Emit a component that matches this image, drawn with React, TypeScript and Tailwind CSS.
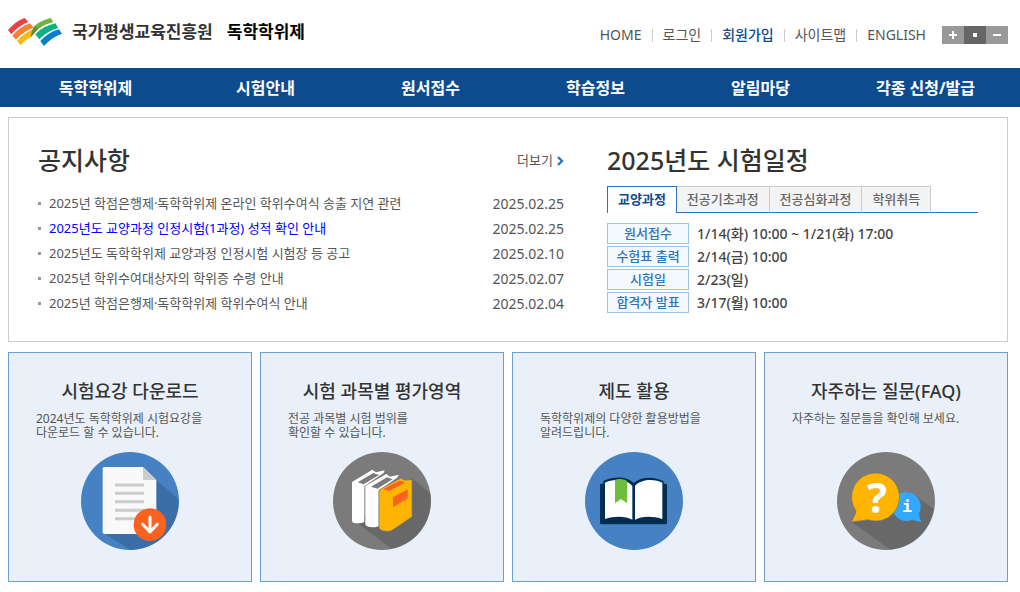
import { ReactNode, useState } from "react";
import clsx from "clsx";

const topLinks = ["HOME", "로그인", "회원가입", "사이트맵", "ENGLISH"];

const menus = [
  "독학학위제",
  "시험안내",
  "원서접수",
  "학습정보",
  "알림마당",
  "각종 신청/발급",
];

const notices = [
  {
    title: "2025년 학점은행제·독학학위제 온라인 학위수여식 송출 지연 관련",
    date: "2025.02.25",
  },
  {
    title: "2025년도 교양과정 인정시험(1과정) 성적 확인 안내",
    date: "2025.02.25",
    highlight: true,
  },
  {
    title: "2025년도 독학학위제 교양과정 인정시험 시험장 등 공고",
    date: "2025.02.10",
  },
  { title: "2025년 학위수여대상자의 학위증 수령 안내", date: "2025.02.07" },
  { title: "2025년 학점은행제·독학학위제 학위수여식 안내", date: "2025.02.04" },
];

const tabs = ["교양과정", "전공기초과정", "전공심화과정", "학위취득"];

const schedule = [
  { label: "원서접수", value: "1/14(화) 10:00 ~ 1/21(화) 17:00" },
  { label: "수험표 출력", value: "2/14(금) 10:00" },
  { label: "시험일", value: "2/23(일)" },
  { label: "합격자 발표", value: "3/17(월) 10:00" },
];

function Logo() {
  return (
    <svg viewBox="24 57 162 84" className="h-7 w-[54px]" aria-hidden="true">
      <path d="M24 93C38 77 54 64 74 57l11 12c-20 7-37 20-51 37z" fill="#ef3e42" />
      <path d="M37 110c14-17 32-30 53-37l11 13c-21 7-38 19-53 36z" fill="#f58232" />
      <path d="M51 126c14-16 30-28 48-35l-6 24c-13 5-22 13-31 24z" fill="#fdb913" />
      <path d="M92 115c2-18 6-30 16-38 12-9 27-16 44-20l8 12c-20 5-36 13-48 24z" fill="#6cb33f" />
      <path d="M92 115c2-14 6-25 13-34l9 10c-7 6-13 14-22 24z" fill="#6b8a2c" />
      <path d="M106 106c16-17 36-28 60-33l9 14c-22 5-41 17-57 34z" fill="#0bb184" />
      <path d="M121 126c15-17 34-29 56-35l9 13c-22 8-40 20-54 37z" fill="#0a7fc9" />
    </svg>
  );
}

function IconCircle({
  color,
  shadow,
  children,
}: {
  color: string;
  shadow?: string;
  children: ReactNode;
}) {
  return (
    <svg viewBox="0 0 294 294" className="size-[98px]" aria-hidden="true">
      <circle cx="147" cy="147" r="147" fill={color} />
      {shadow && <path d={shadow} fill="#000" fillOpacity="0.15" />}
      {children}
    </svg>
  );
}

function DownloadIcon() {
  return (
    <IconCircle
      color="#4682c3"
      shadow="M226 84L293 140A147 147 0 0 1 150 294L72 246z"
    >
      <path
        d="M70 45H186L226 84V241a5 5 0 0 1-5 5H70a5 5 0 0 1-5-5V50a5 5 0 0 1 5-5z"
        fill="#f9f9f9"
      />
      <path d="M186 45L226 84H190a4 4 0 0 1-4-4z" fill="#ccc" />
      <path
        d="M102 99h87M102 124h87M102 149h87M102 175h87M102 200h87"
        stroke="#ccc"
        strokeWidth="9"
      />
      <circle cx="207" cy="218" r="49" fill="#fb611f" />
      <path
        d="M207 195v44M185 217l22 23 22-23"
        fill="none"
        stroke="#fff"
        strokeWidth="9"
        strokeLinecap="round"
        strokeLinejoin="round"
      />
    </IconCircle>
  );
}

function BooksIcon() {
  return (
    <IconCircle
      color="#7b7b7b"
      shadow="M237 78L293 126A147 147 0 0 1 175 290L72 212z"
    >
      <path
        d="M57 90L118 53l11 8 26-6-3 8-8 5-50 35v106c-8 6-37 8-37-2z"
        fill="#fff"
      />
      <path d="M74 91L121 63l17 6-46 28z" fill="#7b7b7b" />
      <path
        d="M97 102L160 66l11 8 26-6-3 8-57 40v106c-8 6-40 5-40-6z"
        fill="#fff"
      />
      <path d="M114 104L162 76l17 6-46 28z" fill="#7b7b7b" />
      <path
        d="M138 114L204 78l10 7 23-2v111l-60 41c-10 6-39 3-39-10z"
        fill="#ffb400"
        stroke="#7b7b7b"
        strokeWidth="2"
      />
      <path d="M150 112L200 86l17 5-48 26z" fill="#fb611f" />
      <path d="M180 136L224 112v27l-44 27z" fill="#fb611f" />
    </IconCircle>
  );
}

function BookIcon() {
  return (
    <IconCircle color="#4682c3">
      <path
        d="M45 99a4 4 0 0 1 4-4h6v-8c28-14 70-15 91 6 22-21 63-20 90-5v7h6a4 4 0 0 1 4 4v114a4 4 0 0 1-4 4H49a4 4 0 0 1-4-4z"
        fill="#002d50"
      />
      <path d="M60 92c25-13 65-10 82 10v101c-20-12-56-11-82-2z" fill="#fff" />
      <path d="M232 92c-25-13-65-10-82 10v101c20-12 56-11 82-2z" fill="#fff" />
      <path d="M90 83c12-3 24-2 36 4v67l-18-13-18 13z" fill="#6ebe3c" />
    </IconCircle>
  );
}

function FaqIcon() {
  return (
    <IconCircle
      color="#7b7b7b"
      shadow="M236 130L290 172A147 147 0 0 1 160 293L43 209z"
    >
      <circle cx="208" cy="164" r="43" fill="#32a8ff" />
      <path d="M246 182c0 10 3 18 7 28-12-1-20-4-28-8z" fill="#32a8ff" />
      <path
        d="M116 63a72 72 0 1 1-24 140c-14 3-30 4-49 7 6-12 12-22 14-33A72 72 0 0 1 116 63z"
        fill="#ffb400"
        stroke="#727272"
        strokeWidth="2"
      />
      <text
        x="120"
        y="182"
        textAnchor="middle"
        fill="#fff"
        fontFamily="Noto Sans"
        fontSize="126"
        fontWeight="700"
      >
        ?
      </text>
      <text
        x="210"
        y="180"
        textAnchor="middle"
        fill="#fff"
        fontFamily="DejaVu Sans Mono"
        fontSize="50"
        fontWeight="700"
      >
        i
      </text>
    </IconCircle>
  );
}

const cards = [
  {
    title: "시험요강 다운로드",
    desc: "2024년도 독학학위제 시험요강을\n다운로드 할 수 있습니다.",
    icon: <DownloadIcon />,
  },
  {
    title: "시험 과목별 평가영역",
    desc: "전공 과목별 시험 범위를\n확인할 수 있습니다.",
    icon: <BooksIcon />,
  },
  {
    title: "제도 활용",
    desc: "독학학위제의 다양한 활용방법을\n알려드립니다.",
    icon: <BookIcon />,
  },
  {
    title: "자주하는 질문(FAQ)",
    desc: "자주하는 질문들을 확인해 보세요.",
    icon: <FaqIcon />,
  },
];

function Header() {
  return (
    <header className="flex h-[68px] items-center justify-between pr-3 pl-2">
      <a href="#" className="flex items-center gap-2.5 pb-1 text-[17px] font-bold">
        <Logo />
        <span className="mr-1 text-[#333]">국가평생교육진흥원</span>
        <span className="text-black">독학학위제</span>
      </a>

      <div className="flex items-center gap-4 pt-0.5">
        <ul className="flex items-center text-sm text-[#555]">
          {topLinks.map((link, i) => (
            <li key={link} className="flex items-center">
              {i > 0 && <span className="mx-2.5 h-[13px] w-px bg-[#ccc]" />}
              <a
                href="#"
                className={clsx(link === "회원가입" && "font-medium text-[#0d4b8f]")}
              >
                {link}
              </a>
            </li>
          ))}
        </ul>

        {/* Font size */}
        <div className="flex">
          <button
            aria-label="글자 크게"
            className="flex h-[18px] w-[22px] items-center justify-center bg-[#999]"
          >
            <svg viewBox="0 0 8 8" className="size-2" aria-hidden="true">
              <path d="M4 0v8M0 4h8" stroke="#fff" strokeWidth="2" />
            </svg>
          </button>
          <button
            aria-label="글자 기본"
            className="flex h-[18px] w-[22px] items-center justify-center bg-[#666]"
          >
            <span className="size-1 bg-white" />
          </button>
          <button
            aria-label="글자 작게"
            className="flex h-[18px] w-[22px] items-center justify-center bg-[#999]"
          >
            <span className="h-0.5 w-2 bg-white" />
          </button>
        </div>
      </div>
    </header>
  );
}

function Notices() {
  return (
    <section className="min-w-0">
      <div className="flex h-9 items-center justify-between">
        <h2 className="text-[25px] font-medium text-[#333]">공지사항</h2>
        <a href="#" className="flex items-center gap-1 text-[13px] text-[#555]">
          더보기
          <svg viewBox="0 0 7 10" className="h-2.5 w-[7px]" aria-hidden="true">
            <path d="M1 1l4 4-4 4" fill="none" stroke="#2f73bb" strokeWidth="2.4" />
          </svg>
        </a>
      </div>
      <ul className="mt-3">
        {notices.map((n) => (
          <li key={n.title} className="flex h-[25px] items-center text-[#555]">
            <span className="mr-2 size-[3px] shrink-0 bg-[#999]" />
            <a
              href="#"
              className={clsx(
                "flex-1 truncate text-[13px]",
                n.highlight && "text-[#0000ff]"
              )}
            >
              {n.title}
            </a>
            <span className="text-sm">{n.date}</span>
          </li>
        ))}
      </ul>
    </section>
  );
}

function Schedule() {
  const [active, setActive] = useState(0);

  return (
    <section className="min-w-0">
      <h2 className="flex h-9 items-center text-[25px] font-medium text-[#333]">
        2025년도 시험일정
      </h2>
      <div role="tablist" className="mt-[7px] flex border-b border-[#2f73bb]">
        {tabs.map((tab, i) => (
          <button
            key={tab}
            role="tab"
            aria-selected={active === i}
            onClick={() => setActive(i)}
            className={clsx(
              "-mb-px h-[27px] border-t px-2.5 text-[13px] whitespace-nowrap",
              active === i
                ? "border-x border-[#2f73bb] bg-white font-bold text-[#0d4b8f]"
                : "border-r border-b border-t-[#ccc] border-r-[#ccc] border-b-[#2f73bb] bg-[#f4f4f4] font-medium text-[#666]"
            )}
          >
            {tab}
          </button>
        ))}
      </div>
      <dl className="mt-2.5 grid grid-cols-[82px_1fr] gap-x-2 gap-y-0.5 font-medium">
        {schedule.map((s) => (
          <div key={s.label} className="contents">
            <dt className="flex h-[21px] items-center justify-center border border-[#9fc2e7] bg-[#f4f9fe] text-[13px] text-[#2f73bb]">
              {s.label}
            </dt>
            <dd className="flex h-[21px] items-center text-sm text-[#444]">
              {s.value}
            </dd>
          </div>
        ))}
      </dl>
    </section>
  );
}

export default function App() {
  return (
    <div className="min-h-screen bg-white font-['Noto_Sans','Noto_Sans_CJK_KR',sans-serif]">
      <Header />

      <nav className="bg-[#0d4b8f] pr-3 pl-2">
        <ul className="grid grid-cols-[175fr_repeat(5,165fr)]">
          {menus.map((menu) => (
            <li key={menu}>
              <a
                href="#"
                className="flex h-[39px] items-center justify-center text-base font-bold text-white"
              >
                {menu}
              </a>
            </li>
          ))}
        </ul>
      </nav>

      <main className="flex flex-col gap-2.5 py-2.5 pr-3 pl-2">
        <div className="grid grid-cols-[526fr_371fr] gap-[43px] border border-[#ccc] px-[29px] py-[25px]">
          <Notices />
          <Schedule />
        </div>

        <div className="grid grid-cols-4 gap-2">
          {cards.map((card) => (
            <a
              key={card.title}
              href="#"
              className="flex flex-col items-center border border-[#6d9fd3] bg-[#e9f0f9] pt-6 pb-[31px]"
            >
              <h3 className="text-lg leading-7 font-medium text-[#333]">
                {card.title}
              </h3>
              <p className="mt-[7px] mb-3 min-h-7 w-full pl-[27px] text-xs leading-[14px] whitespace-pre-line text-[#555]">
                {card.desc}
              </p>
              {card.icon}
            </a>
          ))}
        </div>
      </main>
    </div>
  );
}
